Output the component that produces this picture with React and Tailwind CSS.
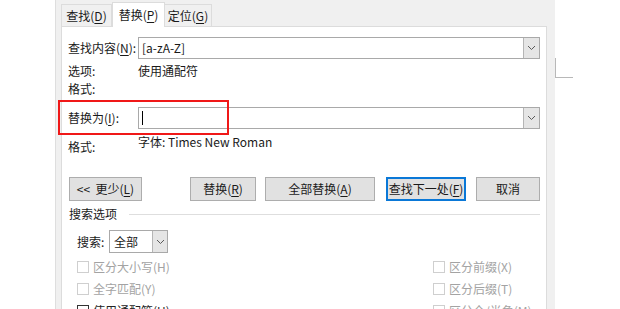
import React from "react";

const U = ({ c }) => <span className="underline underline-offset-2">{c}</span>;

const Chevron = ({ cls = "" }) => (
  <svg width="9" height="6" viewBox="0 0 9 6" className={cls}>
    <path d="M1 1 L4.5 4.5 L8 1" fill="none" stroke="#5a5a5a" strokeWidth="1" />
  </svg>
);

const Check = ({ label, dark = false }) => (
  <div className="flex items-center h-[22px]">
    <div className={`w-[12px] h-[12px] border bg-white ${dark ? "border-[#333]" : "border-[#cfcfcf]"}`} />
    <span className={`ml-[4px] ${dark ? "text-[#222]" : "text-[#a3a3a3]"}`}>{label}</span>
  </div>
);

const Btn = ({ w, ml, children, primary = false }) => (
  <div
    className={`h-[24px] flex items-center justify-center bg-[#e1e1e1] shrink-0 ${
      primary ? "border-2 border-[#0a78d7]" : "border border-[#adadad]"
    }`}
    style={{ width: w, marginLeft: ml }}
  >
    {children}
  </div>
);

export default function App() {
  return (
    <div
      className="relative w-[620px] h-[309px] overflow-hidden bg-white flex text-[12px] text-[#1a1a1a] leading-none"
      style={{ fontFamily: '"Noto Sans CJK SC", "Noto Sans", sans-serif' }}
    >
      <div className="w-[56px] h-full bg-white border-r border-[#dedede] shrink-0" />
      <div className="w-[499px] h-full bg-[#f0f0f0] flex flex-col pl-[5px] pr-[8px] shrink-0">
        {/* tabs */}
        <div className="flex items-end h-[26px] shrink-0">
          <div className="w-[51px] h-[22px] border border-b-0 border-[#dcdcdc] flex items-center justify-center pt-[1px]">
            <span>查找(<U c="D" />)</span>
          </div>
          <div className="relative z-10 -mb-px w-[53px] h-[25px] bg-white border border-b-0 border-[#dcdcdc] flex items-center justify-center pb-[1px]">
            <span>替换(<U c="P" />)</span>
          </div>
          <div className="w-[47px] h-[22px] border border-b-0 border-l-0 border-[#dcdcdc] flex items-center justify-center pt-[1px]">
            <span>定位(<U c="G" />)</span>
          </div>
        </div>
        {/* panel */}
        <div className="flex-1 bg-white border border-[#dcdcdc] px-[6px] flex flex-col">
          <div className="flex items-center h-[22px] mt-[10px]">
            <div className="w-[70px]">查找内容(<U c="N" />):</div>
            <div className="flex-1 h-full border border-[#a9a9a9] flex items-center">
              <span className="flex-1 pl-[3px]">[a-zA-Z]</span>
              <div className="w-[16px] h-full bg-[#e5e5e5] border-l border-[#b5b5b5] flex items-center justify-center">
                <Chevron />
              </div>
            </div>
          </div>
          <div className="flex items-center h-[18px] mt-[3px]">
            <div className="w-[70px]">选项:</div>
            <div>使用通配符</div>
          </div>
          <div className="flex items-center h-[18px]">
            <div className="w-[70px]">格式:</div>
          </div>
          <div className="flex items-center h-[22px] mt-[9px]">
            <div className="w-[70px]">替换为(<U c="I" />):</div>
            <div className="flex-1 h-full border border-[#a9a9a9] flex items-center">
              <div className="flex-1 pl-[3px] flex items-center">
                <div className="w-px h-[14px] bg-black" />
              </div>
              <div className="w-[16px] h-full bg-[#e5e5e5] border-l border-[#b5b5b5] flex items-center justify-center">
                <Chevron />
              </div>
            </div>
          </div>
          <div className="flex h-[29px]">
            <div className="w-[70px] flex items-end pb-[5px]">格式:</div>
            <div className="pt-[7px]">字体: Times New Roman</div>
          </div>
          {/* buttons */}
          <div className="flex items-center mt-[19px]">
            <Btn w={73} ml={1}>
              <span>&lt;&lt;&nbsp;&nbsp;更少(<U c="L" />)</span>
            </Btn>
            <Btn w={66} ml={48}>
              <span>替换(<U c="R" />)</span>
            </Btn>
            <Btn w={110} ml={9}>
              <span>全部替换(<U c="A" />)</span>
            </Btn>
            <Btn w={80} ml={11} primary>
              <span>查找下一处(<U c="F" />)</span>
            </Btn>
            <Btn w={64} ml={10}>
              <span>取消</span>
            </Btn>
          </div>
          {/* search options */}
          <div className="flex items-center h-[16px] mt-[5px] ml-[1px]">
            <span>搜索选项</span>
            <div className="flex-1 h-px bg-[#dedede] ml-[12px]" />
          </div>
          <div className="flex items-center mt-[8px] ml-[9px]">
            <span className="w-[32px]">搜索:</span>
            <div className="w-[59px] h-[23px] border border-[#a9a9a9] flex items-center">
              <span className="flex-1 pl-[4px]">全部</span>
              <div className="w-[15px] h-full bg-[#e5e5e5] border-l border-[#b5b5b5] flex items-center justify-center">
                <Chevron />
              </div>
            </div>
          </div>
          <div className="flex mt-[3px] ml-[9px]">
            <div className="w-[356px]">
              <Check label="区分大小写(H)" />
              <Check label="全字匹配(Y)" />
              <Check label="使用通配符(U)" dark />
            </div>
            <div>
              <Check label="区分前缀(X)" />
              <Check label="区分后缀(T)" />
              <Check label="区分全/半角(M)" />
            </div>
          </div>
        </div>
      </div>
      <div className="flex-1 h-full bg-white relative">
        <div className="absolute left-0 top-[58px] w-px h-[19px] bg-[#b8b8b8]" />
        <div className="absolute left-0 top-[77px] w-[18px] h-px bg-[#b8b8b8]" />
      </div>
      {/* red highlight */}
      <div className="absolute left-[58px] top-[100px] w-[171px] h-[35px] border-2 border-[#f01818]" />
    </div>
  );
}
